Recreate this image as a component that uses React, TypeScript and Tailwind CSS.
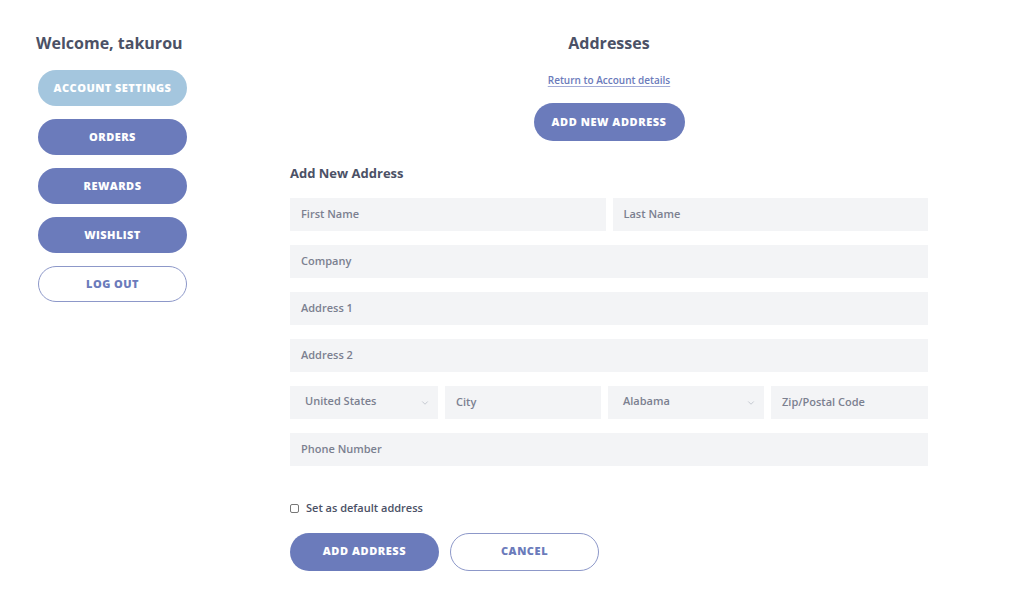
import { ChevronDown } from "lucide-react";

const font = { fontFamily: "'Open Sans', 'Noto Sans', sans-serif" };

function SideButton({ label, variant }: { label: string; variant: "light" | "primary" | "outline" }) {
    const cls =
        variant === "light"
            ? "bg-[#a4c6de] text-white"
            : variant === "primary"
            ? "bg-[#6b7bbb] text-white"
            : "bg-white border border-[#8d98c9] text-[#6b7bbb]";
    return (
        <button className={`w-[149px] h-[36px] rounded-full text-[11px] font-extrabold tracking-[0.04em] ${cls}`}>
            {label}
        </button>
    );
}

function Field({ placeholder, className = "" }: { placeholder: string; className?: string }) {
    return (
        <div className={`h-[33px] bg-[#f3f4f6] flex items-center px-[11px] text-[11px] font-semibold text-[#7b8090] ${className}`}>
            {placeholder}
        </div>
    );
}

function SelectField({ value, className = "" }: { value: string; className?: string }) {
    return (
        <div className={`h-[33px] bg-[#f3f4f6] flex items-center justify-between pl-[15px] pr-[8px] pb-[3px] text-[11px] font-semibold text-[#7b8090] ${className}`}>
            <span>{value}</span>
            <ChevronDown className="w-[10px] h-[10px] text-[#a9afba] mt-[3px]" strokeWidth={1.5} />
        </div>
    );
}

export default function App() {
    return (
        <div className="w-[1024px] h-[593px] bg-white flex text-[#4b5166]" style={font}>
            <div className="w-[290px] shrink-0 pl-[36px] pt-[33px] flex flex-col">
                <div className="text-[16px] font-bold leading-[20px] mb-[17px]">Welcome, takurou</div>
                <div className="flex flex-col gap-[13px] pl-[2px]">
                    <SideButton label="ACCOUNT SETTINGS" variant="light" />
                    <SideButton label="ORDERS" variant="primary" />
                    <SideButton label="REWARDS" variant="primary" />
                    <SideButton label="WISHLIST" variant="primary" />
                    <SideButton label="LOG OUT" variant="outline" />
                </div>
            </div>
            <div className="w-[638px] shrink-0 pt-[33px] flex flex-col">
                <div className="text-center text-[16px] font-bold leading-[20px]">Addresses</div>
                <div className="text-center mt-[18px] leading-[14px]">
                    <a className="text-[10px] font-semibold text-[#6b7bbb] underline decoration-[#a4acd6] underline-offset-2">
                        Return to Account details
                    </a>
                </div>
                <div className="flex justify-center mt-[16px]">
                    <button className="w-[151px] h-[38px] rounded-full bg-[#6b7bbb] text-white text-[11px] font-extrabold tracking-[0.05em]">
                        ADD NEW ADDRESS
                    </button>
                </div>
                <div className="text-[13px] font-bold leading-[16px] mt-[24px] mb-[17px]">Add New Address</div>
                <div className="flex flex-col gap-[14px]">
                    <div className="flex gap-[7px]">
                        <Field placeholder="First Name" className="flex-1" />
                        <Field placeholder="Last Name" className="flex-1" />
                    </div>
                    <Field placeholder="Company" />
                    <Field placeholder="Address 1" />
                    <Field placeholder="Address 2" />
                    <div className="flex gap-[7px]">
                        <SelectField value="United States" className="w-[148px]" />
                        <Field placeholder="City" className="w-[156px]" />
                        <SelectField value="Alabama" className="w-[156px]" />
                        <Field placeholder="Zip/Postal Code" className="flex-1" />
                    </div>
                    <Field placeholder="Phone Number" />
                </div>
                <label className="flex items-center gap-[7px] mt-[34px] text-[11px] font-semibold text-[#4b5166]">
                    <span className="w-[9px] h-[9px] border border-[#777] rounded-[2px] bg-white" />
                    Set as default address
                </label>
                <div className="flex gap-[11px] mt-[16px]">
                    <button className="w-[149px] h-[38px] rounded-full bg-[#6b7bbb] text-white text-[11px] font-extrabold tracking-[0.05em]">
                        ADD ADDRESS
                    </button>
                    <button className="w-[149px] h-[38px] rounded-full bg-white border border-[#8d98c9] text-[#6b7bbb] text-[11px] font-extrabold tracking-[0.05em]">
                        CANCEL
                    </button>
                </div>
            </div>
        </div>
    );
}
